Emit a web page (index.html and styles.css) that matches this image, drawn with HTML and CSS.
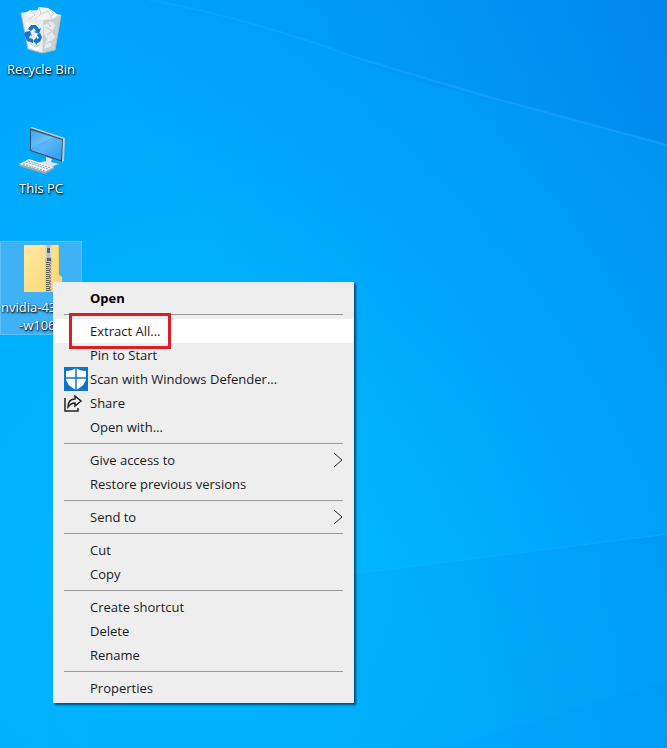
FILE: index.html
```html
<!DOCTYPE html>
<html lang="en">
<head>
  <meta charset="UTF-8">
  <meta name="viewport" content="width=device-width, initial-scale=1.0">
  <title>Desktop</title>
  <link rel="stylesheet" href="styles.css">
</head>
<body>
  <main class="desktop">
    <!-- wallpaper light rays -->
    <svg class="wallpaper" viewBox="0 0 667 748" preserveAspectRatio="none" aria-hidden="true">
      <defs>
        <linearGradient id="rayTop" x1="0" y1="0" x2="1" y2="0">
          <stop offset="0" stop-color="#0090f4" stop-opacity="0"/>
          <stop offset="1" stop-color="#0078e6" stop-opacity=".3"/>
        </linearGradient>
        <linearGradient id="rayLow" x1="0" y1="0" x2="1" y2="0">
          <stop offset="0" stop-color="#008cf0" stop-opacity="0"/>
          <stop offset="1" stop-color="#0088e6" stop-opacity=".2"/>
        </linearGradient>
        <linearGradient id="rayLine" x1="0" y1="0" x2="1" y2="0">
          <stop offset="0" stop-color="#2cb4ff" stop-opacity=".2"/>
          <stop offset="1" stop-color="#18a0ff" stop-opacity=".7"/>
        </linearGradient>
      </defs>
      <path d="M150 0Q250 18 336 52T489 99L667 144V0Z" fill="url(#rayTop)"/>
      <path d="M150 0Q250 18 360 59L489 97L667 145" fill="none" stroke="url(#rayLine)" stroke-width="2"/>
      <path d="M0 622L354 574L667 534V748H0Z" fill="url(#rayLow)"/>
      <path d="M354 574L667 534" fill="none" stroke="#22b4ff" stroke-opacity=".4"/>
      <path d="M445 748L667 681V748Z" fill="#008cf0" fill-opacity=".08"/>
    </svg>

    <div class="icons">
      <button class="icon" type="button">
        <svg viewBox="0 0 48 48" aria-hidden="true">
          <path d="M4 6L18 3L44 8L38 43L25 46L11 42Z" fill="#dce6ec"/>
          <path d="M4 6L26 11L25 46L11 42Z" fill="#e9eef2"/>
          <path d="M26 11L44 8L38 43L25 46Z" fill="#c7cfd5"/>
          <path d="M6 8L13 3L19 5L22 0L31 1L36 4L41 8L36 12L26 13L15 12Z" fill="#f4f4f4"/>
          <path d="M13 3L18 8L12 12M22 0L24 7L31 4L35 12M24 7L18 12M31 1L37 7L33 10" fill="none" stroke="#c9ced2"/>
          <path d="M27 18L34 14L38 18L35 25L38 30L33 35L35 39L27 42L30 32L27 27Z" fill="#e8ebed"/>
          <path d="M9 15L17 17L14 24L9 21ZM12 35L18 33L23 37L21 43L13 41Z" fill="#fafafa"/>
          <path d="M29 20L35 24L30 28M29 37L34 34M31 16L34 20M13 36L18 40L23 38" fill="none" stroke="#bec6cb"/>
          <path d="M4 6L26 11L44 8M26 11L25 46" fill="none" stroke="#f8fbfd" stroke-opacity=".5"/>
          <path d="M4 6L11 42L25 46L38 43L44 8" fill="none" stroke="#aabdca"/>
          <g fill="#1674c9">
            <path d="M11 22L14 18H19L22 22L24 21L22 27L17 25L19 24L17 21L14 24Z"/>
            <path d="M8 25L13 24L15 29L13 28L12 31L16 32V36L10 34L8 29L7 29Z"/>
            <path d="M20 28L23 26L25 30L23 35L20 36V38L16 34L20 30V32L22 31Z"/>
          </g>
        </svg>
        <span class="icon-label">Recycle Bin</span>
      </button>

      <button class="icon" type="button">
        <svg viewBox="0 0 48 48" aria-hidden="true">
          <defs>
            <linearGradient id="screen" x1="0" y1="0" x2="1" y2="1">
              <stop offset="0" stop-color="#3da7ee"/>
              <stop offset=".5" stop-color="#73c8ff"/>
              <stop offset="1" stop-color="#32a3f4"/>
            </linearGradient>
          </defs>
          <path d="M13 2L15 1L48 12L47 35L45 36L13 25Z" fill="#b9ced9"/>
          <path d="M13 2L46 13L45 36L13 25Z" fill="#34556c"/>
          <path d="M14 4L45 14L44 34L14 24Z" fill="url(#screen)"/>
          <path d="M14 22L36 11L45 14L44 34L14 24Z" fill="#2495ed" fill-opacity=".35"/>
          <path d="M29 31L35 33L34 36L42 38L35 41L21 37L29 35Z" fill="#dce5e9"/>
          <path d="M21 37L35 41L42 38" fill="none" stroke="#8aa5b4"/>
          <path d="M2 38L12 33L37 41L28 46Z" fill="#edf1f3"/>
          <path d="M2 38L28 46L37 41V43L28 48L2 40Z" fill="#9aaab3"/>
          <path d="M6 38L28 45M9 36L31 43M11 35L34 42" fill="none" stroke="#93a2ac" stroke-dasharray="2 1"/>
        </svg>
        <span class="icon-label">This PC</span>
      </button>

      <button class="icon selected" type="button">
        <svg viewBox="0 0 48 48" aria-hidden="true">
          <defs>
            <linearGradient id="folder" x1="0" y1="0" x2="1" y2="1">
              <stop offset="0" stop-color="#ffe9a2"/>
              <stop offset="1" stop-color="#f8d775"/>
            </linearGradient>
          </defs>
          <path d="M7 0H42V30L45 33V39L41 42V47H7Z" fill="#eec964"/>
          <path d="M7 0H41V47H7Z" fill="url(#folder)"/>
          <path d="M41 29L45 32V39L41 41Z" fill="#f8d775"/>
          <path d="M28 0H35V47H28Z" fill="#d9cfae"/>
          <path d="M31 13V47" fill="none" stroke="#605e55" stroke-width="4" stroke-dasharray="1 1"/>
          <path d="M33 14V47" fill="none" stroke="#96938a" stroke-width="2" stroke-dasharray="2 1"/>
          <path d="M28 0H35L34 13L36 17H28L29 12Z" fill="#b9bdc0"/>
          <path d="M30 3H33V8H30ZM30 13H34V16H30Z" fill="#5e6266"/>
          <path d="M29 0V12M34 0V12" stroke="#eef0f1"/>
        </svg>
        <span class="icon-label icon-label-long"><span>nvidia-43</span><span class="second-line">-w106</span></span>
      </button>
    </div>

    <div class="menu" role="menu">
      <button class="menu-item default" type="button" role="menuitem">Open</button>
      <hr>
      <button class="menu-item active" type="button" role="menuitem">Extract All...<span class="highlight"></span></button>
      <button class="menu-item" type="button" role="menuitem">Pin to Start</button>
      <button class="menu-item" type="button" role="menuitem">
        <svg class="menu-icon" viewBox="0 0 24 24" aria-hidden="true">
          <path d="M0 0H24V24H0Z" fill="#0f73ce"/>
          <path d="M12 1Q16 4 22 4V11Q22 18 12 23Q2 18 2 11V4Q8 4 12 1Z" fill="#fff"/>
          <path d="M12 1V23M2 11H22" stroke="#0f73ce" stroke-width="1.5"/>
        </svg>
        Scan with Windows Defender...
      </button>
      <button class="menu-item" type="button" role="menuitem">
        <svg class="menu-icon" viewBox="0 0 24 24" aria-hidden="true">
          <path d="M1 7V20H14V17M11 5L17 10L11 15V12Q7 12 4 16Q4 8 11 8Z" fill="none" stroke="#222" stroke-width="1.5"/>
        </svg>
        Share
      </button>
      <button class="menu-item" type="button" role="menuitem">Open with...</button>
      <hr>
      <button class="menu-item" type="button" role="menuitem" aria-haspopup="true">Give access to
        <svg class="arrow" viewBox="0 0 10 16" aria-hidden="true"><path d="M1 1L9 8L1 15"/></svg>
      </button>
      <button class="menu-item" type="button" role="menuitem">Restore previous versions</button>
      <hr>
      <button class="menu-item" type="button" role="menuitem" aria-haspopup="true">Send to
        <svg class="arrow" viewBox="0 0 10 16" aria-hidden="true"><path d="M1 1L9 8L1 15"/></svg>
      </button>
      <hr>
      <button class="menu-item" type="button" role="menuitem">Cut</button>
      <button class="menu-item" type="button" role="menuitem">Copy</button>
      <hr>
      <button class="menu-item" type="button" role="menuitem">Create shortcut</button>
      <button class="menu-item" type="button" role="menuitem">Delete</button>
      <button class="menu-item" type="button" role="menuitem">Rename</button>
      <hr>
      <button class="menu-item" type="button" role="menuitem">Properties</button>
    </div>
  </main>
</body>
</html>
```
FILE: styles.css
```css
* {
  box-sizing: border-box;
}
body {
  margin: 0;
  font-family: "Open Sans", "Noto Sans", sans-serif;
  font-size: 13px;
}
button {
  margin: 0;
  border: none;
  background: none;
  color: inherit;
  font: inherit;
}

/* desktop */
.desktop {
  position: relative;
  min-height: 100vh;
  overflow: hidden;
  background:
    linear-gradient(60deg, rgba(0, 116, 226, 0) 45%, rgba(0, 116, 226, 0.4) 100%),
    radial-gradient(circle at 35% 78%, #00b6ff 0%, #00b2ff 35%, #00a0f9 100%);
}
.wallpaper {
  position: absolute;
  inset: 0;
  width: 100%;
  height: 100%;
}

/* desktop icons */
.icons {
  position: relative;
  display: grid;
  grid-template-columns: 82px;
  grid-auto-rows: 119px;
  align-items: start;
  padding-top: 3px;
}
.icon {
  display: flex;
  flex-direction: column;
  align-items: center;
  gap: 5px;
  padding: 3px 0 0;
  border: 1px solid transparent;
  color: #fff;
  line-height: 18px;
}
.icon svg {
  width: 48px;
  height: 48px;
}
.icon.selected {
  border-color: #5cbffa;
  background: #3fb2f6;
}
.icon-label {
  text-shadow: 1px 1px 2px #000, 0 1px 2px rgba(0, 0, 0, 0.6);
}
.icon-label-long {
  display: flex;
  flex-direction: column;
  align-self: stretch;
  text-align: left;
}
.second-line {
  padding-left: 18px;
}

/* context menu */
.menu {
  position: absolute;
  top: 282px;
  left: 53px;
  width: 301px;
  padding: 3px 0 2px;
  border: 1px solid #e4eef2;
  background: #eee;
  color: #1a1a1a;
  box-shadow: 2px 2px 2px rgba(0, 0, 0, 0.55);
}
.menu hr {
  height: 1px;
  margin: 4px 10px;
  border: none;
  background: #999;
}
.menu-item {
  position: relative;
  display: flex;
  align-items: center;
  width: 100%;
  height: 24px;
  padding: 0 10px 0 36px;
  text-align: left;
  white-space: nowrap;
}
.menu-item.default {
  color: #000;
  font-weight: bold;
}
.menu-item.active {
  background: #fff;
}
.menu-icon {
  width: 24px;
  height: 24px;
  margin-left: -26px;
  margin-right: 2px;
}
.arrow {
  width: 10px;
  height: 16px;
  margin-left: auto;
  fill: none;
  stroke: #222;
}
/* red frame round the active item */
.highlight {
  position: absolute;
  z-index: 1;
  top: -6px;
  left: 15px;
  width: 102px;
  height: 36px;
  border: 3px solid #dc1e28;
}
```
